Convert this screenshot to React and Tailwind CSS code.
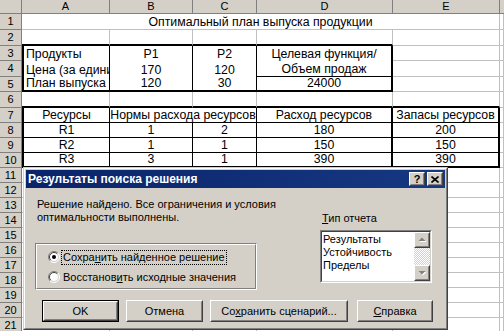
import clsx from "clsx"

// row heights for rows 1..21 (row 21 is cut off by the window)
const ROWH = [
  "h-[16px]", "h-[16px]", "h-[15px]", "h-[16px]", "h-[15px]", "h-[16px]", "h-[15px]",
  "h-[15px]", "h-[15px]", "h-[15px]", "h-[15px]", "h-[15px]", "h-[15px]", "h-[15px]",
  "h-[15px]", "h-[15px]", "h-[15px]", "h-[15px]", "h-[15px]", "h-[15px]", "h-[15px]",
]

const R = {
  g: "border-r border-r-[#c0c0c0]",
  t: "border-r border-r-black",
  T: "border-r-2 border-r-black",
}
const B = {
  g: "border-b border-b-[#c0c0c0]",
  t: "border-b border-b-black",
  T: "border-b-2 border-b-black",
  n: "",
}
const L = { T: "border-l-2 border-l-black" }

const A = "w-[88px]"
const Bc = "w-[83px]"
const C = "w-[64px]"
const D = "w-[136px]"
const E = "w-[107px]"
const F = "flex-1"

const plain = () => [{ w: A }, { w: Bc }, { w: C }, { w: D }, { w: E }, { w: F }]
const t2 = (a, b, c, d, e, last) => {
  const bb = last ? "T" : "t"
  return [
    { w: A, t: a, l: "T", r: "t", b: bb },
    { w: Bc, t: b, r: "t", b: bb },
    { w: C, t: c, r: "t", b: bb },
    { w: D, t: d, r: "T", b: bb },
    { w: E, t: e, r: "T", b: bb },
    { w: F },
  ]
}

const ROWS = [
  [{ w: "w-[478px]", t: "Оптимальный план выпуска продукции" }, { w: F }],
  [{ w: A, b: "T" }, { w: Bc, b: "T" }, { w: C, b: "T" }, { w: D, b: "T" }, { w: E }, { w: F }],
  [
    { w: A, t: "Продукты", a: "l", l: "T", r: "t", b: "n" },
    { w: Bc, t: "P1", r: "t", b: "n" },
    { w: C, t: "P2", r: "t", b: "n" },
    { w: D, t: "Целевая функция/", r: "T", b: "n" },
    { w: E }, { w: F },
  ],
  [
    { w: A, t: "Цена (за единицу)", a: "l", l: "T", r: "t", b: "n" },
    { w: Bc, t: "170", r: "t", b: "n" },
    { w: C, t: "120", r: "t", b: "n" },
    { w: D, t: "Объем продаж", r: "T", b: "t" },
    { w: E }, { w: F },
  ],
  [
    { w: A, t: "План выпуска", a: "l", l: "T", r: "t", b: "T" },
    { w: Bc, t: "120", r: "t", b: "T" },
    { w: C, t: "30", r: "t", b: "T" },
    { w: D, t: "24000", r: "T", b: "T" },
    { w: E }, { w: F },
  ],
  [{ w: A, b: "T" }, { w: Bc, b: "T" }, { w: C, b: "T" }, { w: D, b: "T" }, { w: E, b: "T" }, { w: F }],
  [
    { w: A, t: "Ресурсы", l: "T", r: "t", b: "t" },
    { w: "w-[147px]", t: "Нормы расхода ресурсов", r: "t", b: "t" },
    { w: D, t: "Расход ресурсов", r: "T", b: "t" },
    { w: E, t: "Запасы ресурсов", r: "T", b: "t" },
    { w: F },
  ],
  t2("R1", "1", "2", "180", "200"),
  t2("R2", "1", "1", "150", "150"),
  t2("R3", "3", "1", "390", "390", true),
]

function Cell({ w, t, a, l, r = "g", b = "g" }) {
  return (
    <div
      className={clsx(
        "flex shrink-0 items-end overflow-hidden whitespace-nowrap leading-[13px]",
        w,
        a === "l" ? "justify-start pl-[2px]" : "justify-center",
        l && L[l],
        R[r],
        B[b]
      )}
    >
      {t}
    </div>
  )
}

function Sheet() {
  const heads = [
    ["A", A], ["B", Bc], ["C", C], ["D", D], ["E", E],
  ]
  return (
    <div className="flex flex-col text-[12.3px] text-black">
      {/* column headers */}
      <div className="flex h-[14px] text-[11px] leading-[13px]">
        <div className="w-[22px] shrink-0 border-r border-b border-[#808080] bg-[#d4d0c8]" />
        {heads.map(([h, w]) => (
          <div key={h} className={clsx("flex shrink-0 justify-center border-r border-b border-[#808080] bg-[#d4d0c8]", w)}>
            {h}
          </div>
        ))}
        <div className="flex-1 border-b border-[#808080] bg-[#d4d0c8]" />
      </div>

      {ROWH.map((h, i) => {
        const cells = ROWS[i] || plain()
        return (
          <div key={i} className={clsx("flex", h)}>
            <div className="flex w-[22px] shrink-0 items-center justify-center border-r border-b border-[#808080] bg-[#d4d0c8] text-[11px]">
              {i + 1}
            </div>
            {cells.map((c, j) => (
              <Cell key={j} {...c} />
            ))}
          </div>
        )
      })}
    </div>
  )
}

function Raised({ className, children }) {
  return (
    <div className={clsx("border border-t-white border-l-white border-r-[#404040] border-b-[#404040]", className)}>
      <div className="flex h-full items-center justify-center border border-t-[#d4d0c8] border-l-[#d4d0c8] border-r-[#808080] border-b-[#808080] bg-[#d4d0c8]">
        {children}
      </div>
    </div>
  )
}

function Btn({ w, def, children }) {
  if (def) {
    return (
      <div className={clsx("h-[22px] border border-black", w)}>
        <Raised className="h-full">{children}</Raised>
      </div>
    )
  }
  return <Raised className={clsx("h-[22px]", w)}>{children}</Raised>
}

function Radio({ on }) {
  return (
    <svg width="12" height="12" viewBox="0 0 12 12" className="shrink-0">
      <circle cx="6" cy="6" r="5" fill="white" />
      <path d="M2.1 9.9 A5.5 5.5 0 0 1 9.9 2.1" stroke="#808080" fill="none" />
      <path d="M9.9 2.1 A5.5 5.5 0 0 1 2.1 9.9" stroke="#ffffff" fill="none" />
      <path d="M2.8 9.2 A4.5 4.5 0 0 1 9.2 2.8" stroke="#404040" fill="none" />
      <path d="M9.2 2.8 A4.5 4.5 0 0 1 2.8 9.2" stroke="#d4d0c8" fill="none" />
      {on && <circle cx="6" cy="6" r="2" fill="black" />}
    </svg>
  )
}

function Arrow({ down }) {
  return (
    <svg width="9" height="6" viewBox="0 0 9 6">
      {down ? (
        <>
          <path d="M1.5 2 L8.5 2 L5 5.5 Z" fill="white" />
          <path d="M0.5 1 L7.5 1 L4 4.5 Z" fill="#808080" />
        </>
      ) : (
        <>
          <path d="M1.5 5 L8.5 5 L5 1.5 Z" fill="white" />
          <path d="M0.5 4 L7.5 4 L4 0.5 Z" fill="#808080" />
        </>
      )}
    </svg>
  )
}

function Dialog() {
  return (
    <div className="absolute left-[23px] top-[167px] h-[163px] w-[425px] border border-t-[#d4d0c8] border-l-[#d4d0c8] border-r-[#404040] border-b-[#404040] bg-[#d4d0c8] text-[11px] text-black">
      <div className="h-full border border-t-white border-l-white border-r-[#808080] border-b-[#808080] p-px">
        {/* title bar */}
        <div className="flex h-[18px] items-center bg-gradient-to-r from-[#0a246a] to-[#163882] pl-[2px] pr-[2px]">
          <span className="text-[12px] font-bold text-white">Результаты поиска решения</span>
          <div className="ml-auto flex gap-[2px]">
            <Raised className="h-[14px] w-[16px]">
              <span className="text-[11px] font-bold leading-none">?</span>
            </Raised>
            <Raised className="h-[14px] w-[16px]">
              <svg width="8" height="7" viewBox="0 0 8 7">
                <path d="M0.5 0.5 L7.5 6.5 M7.5 0.5 L0.5 6.5" stroke="black" strokeWidth="1.6" />
              </svg>
            </Raised>
          </div>
        </div>

        <div className="flex pl-[9px]">
          <div className="w-[222px] shrink-0">
            <p className="whitespace-nowrap pl-[2px] pt-[10px] leading-[13px]">
              Решение найдено. Все ограничения и условия
              <br />
              оптимальности выполнены.
            </p>
            {/* group box */}
            <div className="mt-[19px] h-[47px] border border-t-[#808080] border-l-[#808080] border-r-white border-b-white">
              <div className="flex h-full flex-col gap-[4px] border border-t-white border-l-white border-r-[#808080] border-b-[#808080] pl-[11px] pt-[4px]">
                <div className="flex h-[16px] items-center gap-[1px]">
                  <Radio on />
                  <span className="border border-dotted border-black px-[1px] leading-[13px]">
                    Сохра<u>н</u>ить найденное решение
                  </span>
                </div>
                <div className="flex h-[16px] items-center gap-[3px]">
                  <Radio />
                  <span className="leading-[13px]">
                    Восстанов<u>и</u>ть исходные значения
                  </span>
                </div>
              </div>
            </div>
          </div>

          <div className="ml-[63px] pt-[24px]">
            <div className="pl-[2px] leading-[13px]">
              <u>Т</u>ип отчета
            </div>
            <div className="mt-[5px] h-[53px] w-[112px] border border-t-[#808080] border-l-[#808080] border-r-white border-b-white">
              <div className="flex h-full border border-t-[#404040] border-l-[#404040] border-r-[#d4d0c8] border-b-[#d4d0c8] bg-white">
                <div className="flex-1 pl-[1px] pt-px leading-[13px]">
                  <div>Результаты</div>
                  <div>Устойчивость</div>
                  <div>Пределы</div>
                </div>
                <div className="flex w-[16px] flex-col">
                  <Raised className="h-[16px]">
                    <Arrow />
                  </Raised>
                  <div className="flex-1 bg-[repeating-conic-gradient(#d4d0c8_0_25%,#ffffff_0_50%)] bg-[length:2px_2px]" />
                  <Raised className="h-[16px]">
                    <Arrow down />
                  </Raised>
                </div>
              </div>
            </div>
          </div>
        </div>

        {/* buttons */}
        <div className="mt-[10px] flex pl-[16px]">
          <Btn w="w-[77px]" def>
            OK
          </Btn>
          <div className="ml-[7px]">
            <Btn w="w-[77px]">Отмена</Btn>
          </div>
          <div className="ml-[7px]">
            <Btn w="w-[138px]">
              Со<u>х</u>ранить сценарий...
            </Btn>
          </div>
          <div className="ml-[9px]">
            <Btn w="w-[76px]">
              <u>С</u>правка
            </Btn>
          </div>
        </div>
      </div>
    </div>
  )
}

export default function App() {
  return (
    <div className="relative h-[331px] w-[504px] overflow-hidden bg-white font-['Liberation_Sans',Arial,sans-serif]">
      <Sheet />
      <Dialog />
    </div>
  )
}
